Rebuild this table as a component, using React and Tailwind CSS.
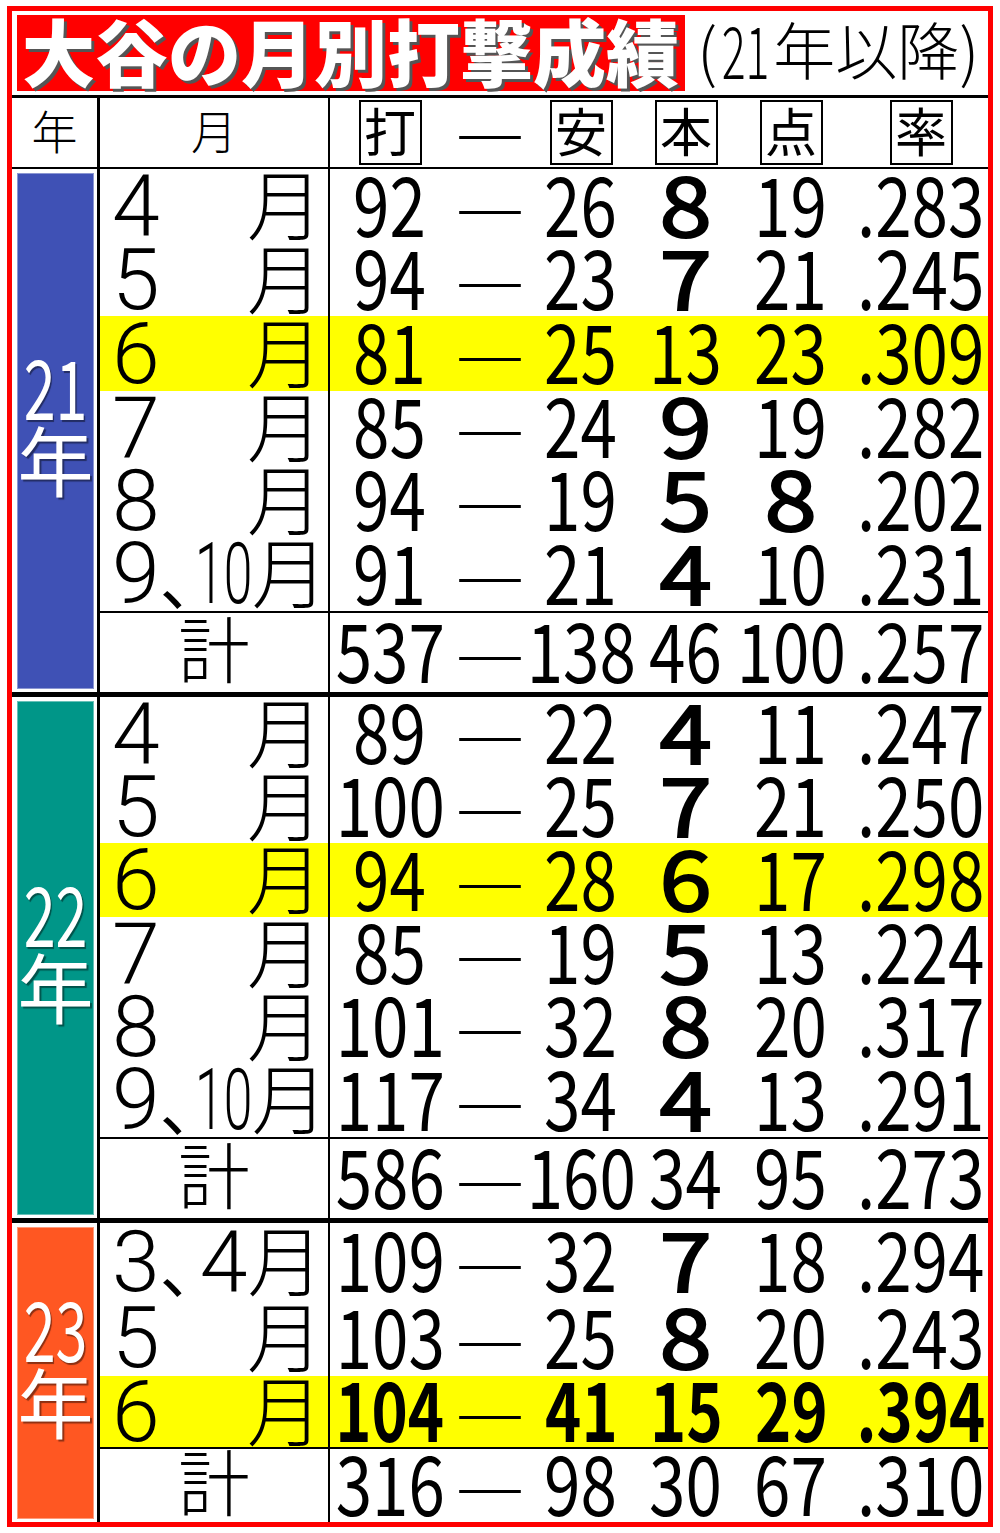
import React from "react";

const JP = "font-['Noto_Sans_CJK_JP','Noto_Sans',sans-serif]";
const RB = "font-['Roboto','Noto_Sans_CJK_JP',sans-serif]";

// 年ごとのデータ
const sections = [
  {
    year: "21",
    color: "bg-[#3f51b5]",
    last: false,
    rows: [
      { m: "4", v: ["92", "26", "8", "19", ".283"], h: "h-[74px]" },
      { m: "5", v: ["94", "23", "7", "21", ".245"], h: "h-[73px]" },
      { m: "6", v: ["81", "25", "13", "23", ".309"], h: "h-[75px]", hl: true },
      { m: "7", v: ["85", "24", "9", "19", ".282"], h: "h-[73px]" },
      { m: "8", v: ["94", "19", "5", "8", ".202"], h: "h-[73px]" },
      { m: "9、10", v: ["91", "21", "4", "10", ".231"], h: "h-[74px]" },
    ],
    total: ["537", "138", "46", "100", ".257"],
    totalH: "h-[81px]",
  },
  {
    year: "22",
    color: "bg-[#009688]",
    last: false,
    rows: [
      { m: "4", v: ["89", "22", "4", "11", ".247"], h: "h-[73px]" },
      { m: "5", v: ["100", "25", "7", "21", ".250"], h: "h-[73px]" },
      { m: "6", v: ["94", "28", "6", "17", ".298"], h: "h-[74px]", hl: true },
      { m: "7", v: ["85", "19", "5", "13", ".224"], h: "h-[73px]" },
      { m: "8", v: ["101", "32", "8", "20", ".317"], h: "h-[73px]" },
      { m: "9、10", v: ["117", "34", "4", "13", ".291"], h: "h-[74px]" },
    ],
    total: ["586", "160", "34", "95", ".273"],
    totalH: "h-[81px]",
  },
  {
    year: "23",
    color: "bg-[#ff5722]",
    last: true,
    rows: [
      { m: "3、4", v: ["109", "32", "7", "18", ".294"], h: "h-[77px]" },
      { m: "5", v: ["103", "25", "8", "20", ".243"], h: "h-[76px]" },
      { m: "6", v: ["104", "41", "15", "29", ".394"], h: "h-[71px]", hl: true, bold: true },
    ],
    total: ["316", "98", "30", "67", ".310"],
    totalH: "h-[75px]",
  },
];

// 列幅: 打 / ― / 安 / 本 / 点 / 率
const COLS = ["w-[120px]", "w-[80px]", "w-[102px]", "w-[108px]", "w-[102px]", "w-[146px] pl-[12px]"];

function Num({ v, bold }) {
  const single = v.length === 1;
  let cls = "scale-x-[0.8]";
  if (single) cls = "scale-x-[1.15] [-webkit-text-stroke:2px_#000]";
  else if (bold) cls = "font-bold scale-x-[0.75]";
  return <span className={`inline-block whitespace-nowrap ${cls}`}>{v}</span>;
}

function Dash() {
  return <span className={`${JP} text-[72px] leading-none`}>―</span>;
}

function NumberRow({ v, bold }) {
  const cells = [v[0], null, v[1], v[2], v[3], v[4]];
  return (
    <div className={`${JP} flex h-full items-center pb-[9px] text-[82px] leading-none text-black`}>
      {cells.map((c, i) => (
        <div key={i} className={`flex shrink-0 justify-center ${COLS[i]} ${c === null ? "pt-[12px]" : ""}`}>
          {c === null ? <Dash /> : <Num v={c} bold={bold} />}
        </div>
      ))}
    </div>
  );
}

function Month({ m }) {
  const tsuki = <span className={`${JP} -mt-[10px] text-[76px] font-light leading-none`}>月</span>;
  const digit = `${RB} text-[86px] font-light leading-none`;
  const comma = `${JP} pt-[6px] text-[64px] leading-none`;
  if (m === "9、10") {
    return (
      <div className="flex h-full items-center justify-between pl-[12px] pr-[5px]">
        <div className="flex items-center">
          <span className={digit}>9</span>
          <span className={`${comma} w-[36px]`}>、</span>
          <span className="flex w-[56px] justify-center">
            <span className={`${digit} inline-block scale-x-[0.6]`}>10</span>
          </span>
        </div>
        {tsuki}
      </div>
    );
  }
  if (m === "3、4") {
    return (
      <div className="flex h-full items-center justify-between pl-[12px] pr-[5px]">
        <div className="flex items-center">
          <span className={digit}>3</span>
          <span className={`${comma} w-[40px]`}>、</span>
          <span className={digit}>4</span>
        </div>
        {tsuki}
      </div>
    );
  }
  return (
    <div className="flex h-full items-center justify-between pl-[12px] pr-[5px]">
      <span className={digit}>{m}</span>
      {tsuki}
    </div>
  );
}

function Section({ s }) {
  return (
    <div className={`flex ${s.last ? "" : "border-b-[5px] border-black"}`}>
      {/* 年のセル */}
      <div className="w-[88px] shrink-0 border-r-[3px] border-black pb-[3px] pl-[5px] pr-[3px] pt-[4px]">
        <div className={`flex h-full flex-col items-center justify-center border border-white/40 pb-[22px] ${s.color} text-white [text-shadow:2px_2px_1px_rgba(0,0,0,0.45)]`}>
          <span className={`${JP} inline-block scale-x-[0.7] text-[82px] leading-none`}>{s.year}</span>
          <span className={`${JP} -mt-[6px] text-[76px] leading-none`}>年</span>
        </div>
      </div>
      <div className="flex flex-1 flex-col">
        {s.rows.map((r, i) => (
          <div key={i} className={`flex ${r.h} ${r.hl ? "bg-[#ffff00]" : ""}`}>
            <div className="w-[230px] shrink-0 border-r-[2px] border-black">
              <Month m={r.m} />
            </div>
            <div className="flex-1">
              <NumberRow v={r.v} bold={r.bold} />
            </div>
          </div>
        ))}
        <div className={`flex ${s.totalH} border-t-[2px] border-black`}>
          <div className="flex w-[230px] shrink-0 items-center justify-center border-r-[2px] border-black pb-[14px]">
            <span className={`${JP} text-[72px] font-light leading-none`}>計</span>
          </div>
          <div className="flex-1">
            <NumberRow v={s.total} />
          </div>
        </div>
      </div>
    </div>
  );
}

function HeadBox({ c, extra = "" }) {
  return (
    <div className={`flex shrink-0 justify-center ${extra}`}>
      <span className={`${JP} flex h-[65px] w-[63px] items-center justify-center border-2 border-black pb-[6px] text-[52px] leading-none`}>
        {c}
      </span>
    </div>
  );
}

export default function App() {
  return (
    <div className="h-[1533px] w-[1000px] bg-white pl-[7px] pt-[6px] text-black">
      <div className="flex h-[1521px] w-[986px] flex-col border-[5px] border-[#ff0000]">
        {/* タイトル */}
        <div className="flex h-[84px] items-center pl-[5px]">
          <div className="flex h-[76px] w-[668px] shrink-0 items-center bg-[#ff0000] pb-[8px] pl-[5px]">
            <span className={`${JP} whitespace-nowrap text-[73px] font-black leading-none text-white [text-shadow:3px_3px_0_#555]`}>
              大谷の月別打撃成績
            </span>
          </div>
          <div className={`${JP} ml-[12px] flex items-center whitespace-nowrap pb-[10px] font-light leading-none`}>
            <span className="text-[64px]">(</span>
            <span className="flex w-[56px] justify-center">
              <span className="inline-block scale-x-[0.62] text-[72px]">21</span>
            </span>
            <span className="text-[62px]">年以降</span>
            <span className="text-[64px]">)</span>
          </div>
        </div>

        {/* 見出し行 */}
        <div className="flex h-[74px] border-b-[2px] border-t-[3px] border-black">
          <div className="flex w-[88px] shrink-0 items-center justify-center border-r-[3px] border-black pb-[8px]">
            <span className={`${JP} text-[46px] font-light leading-none`}>年</span>
          </div>
          <div className="flex w-[230px] shrink-0 items-center justify-center border-r-[2px] border-black pb-[8px]">
            <span className={`${JP} text-[46px] font-light leading-none`}>月</span>
          </div>
          <div className="flex flex-1 items-center">
            <HeadBox c="打" extra={COLS[0]} />
            <div className={`flex shrink-0 justify-center ${COLS[1]}`}>
              <Dash />
            </div>
            <HeadBox c="安" extra={COLS[2]} />
            <HeadBox c="本" extra={COLS[3]} />
            <HeadBox c="点" extra={COLS[4]} />
            <HeadBox c="率" extra={COLS[5]} />
          </div>
        </div>

        {sections.map((s) => (
          <Section key={s.year} s={s} />
        ))}
      </div>
    </div>
  );
}
